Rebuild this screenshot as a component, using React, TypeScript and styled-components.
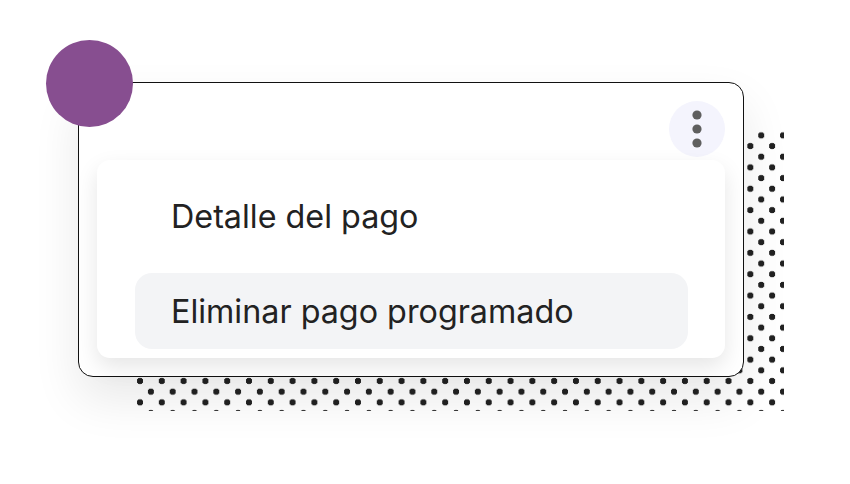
import React from 'react';
import styled, { createGlobalStyle } from 'styled-components';

const GlobalStyle = createGlobalStyle`
  html, body {
    margin: 0;
    padding: 0;
    background: #ffffff;
  }
  body {
    font-family: Inter, "Noto Sans", sans-serif;
    -webkit-font-smoothing: antialiased;
  }
`;

const Stage = styled.main`
  position: relative;
  width: 850px;
  height: 484px;
  box-sizing: border-box;
  padding: 82px 0 0 78px;
  overflow: hidden;
`;

// decorative dotted backdrop behind the card
const DotField = styled.div`
  position: absolute;
  left: 134px;
  top: 130px;
  width: 649.5px;
  height: 281px;
  z-index: 0;
  background-image:
    radial-gradient(circle at center, #222222 2.9px, transparent 3.5px),
    radial-gradient(circle at center, #222222 2.9px, transparent 3.5px);
  background-size: 21.8px 21.36px, 21.8px 21.36px;
  background-position: -4.9px 5.36px, 6px -5.32px;
`;

const Card = styled.section`
  position: relative;
  z-index: 1;
  width: 666px;
  box-sizing: border-box;
  padding: 18px;
  border: 1px solid #111111;
  border-radius: 15px;
  background: #ffffff;
  box-shadow: 0 22px 48px rgba(0, 0, 0, 0.09);
  display: flex;
  flex-direction: column;
  gap: 3px;
`;

const Badge = styled.span`
  position: absolute;
  left: -33px;
  top: -43px;
  width: 87px;
  height: 87px;
  border-radius: 50%;
  background: #874e90;
`;

const Header = styled.div`
  display: flex;
  justify-content: flex-end;
`;

const KebabButton = styled.button`
  width: 56px;
  height: 56px;
  border: none;
  padding: 0;
  border-radius: 50%;
  background: #f4f4fd;
  display: flex;
  align-items: center;
  justify-content: center;
  cursor: pointer;
`;

const Menu = styled.ul`
  list-style: none;
  margin: 0;
  height: 198px;
  box-sizing: border-box;
  padding: 18px 37px 9px 38px;
  border-radius: 13px;
  background: #ffffff;
  box-shadow: 0 9px 22px rgba(0, 0, 0, 0.1);
  display: flex;
  flex-direction: column;
  gap: 19px;
`;

const MenuItem = styled.li<{ $active?: boolean }>`
  height: 76px;
  box-sizing: border-box;
  padding: 0 36px;
  border-radius: 17px;
  display: flex;
  align-items: center;
  background: ${({ $active }) => ($active ? '#f3f4f6' : 'transparent')};
  color: #222222;
  font-size: 32.3px;
  font-weight: 400;
  letter-spacing: 0;
`;

const KebabIcon = () => (
  <svg width="10" height="38" viewBox="0 0 10 38" aria-hidden="true">
    <circle cx="5" cy="5" r="4.6" fill="#5f5f5f" />
    <circle cx="5" cy="19" r="4.6" fill="#5f5f5f" />
    <circle cx="5" cy="33" r="4.6" fill="#5f5f5f" />
  </svg>
);

const items = [
  { label: 'Detalle del pago', active: false },
  { label: 'Eliminar pago programado', active: true },
];

export default function App() {
  return (
    <>
      <GlobalStyle />
      <Stage>
        <DotField />
        <Card>
          <Badge />
          <Header>
            <KebabButton aria-label="Más opciones">
              <KebabIcon />
            </KebabButton>
          </Header>
          <Menu>
            {items.map((item) => (
              <MenuItem key={item.label} $active={item.active}>
                {item.label}
              </MenuItem>
            ))}
          </Menu>
        </Card>
      </Stage>
    </>
  );
}
